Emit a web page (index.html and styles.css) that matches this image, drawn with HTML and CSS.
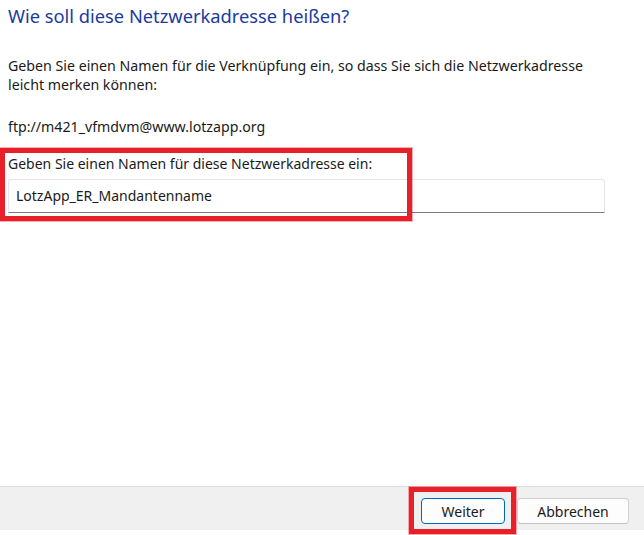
FILE: index.html
```html
<!DOCTYPE html>
<html lang="de">
<head>
<meta charset="utf-8">
<title>Netzwerkadresse</title>
<link rel="stylesheet" href="styles.css">
</head>
<body>
<div class="page">
  <main class="content">
    <h1 class="title">Wie soll diese Netzwerkadresse heißen?</h1>
    <p class="intro">Geben Sie einen Namen für die Verknüpfung ein, so dass Sie sich die Netzwerkadresse leicht merken können:</p>
    <p class="address">ftp://m421_vfmdvm@www.lotzapp.org</p>
    <div class="field">
      <label class="field-label" for="name">Geben Sie einen Namen für diese Netzwerkadresse ein:</label>
      <div class="input" id="name">LotzApp_ER_Mandantenname</div>
      <div class="mark mark-field"></div>
    </div>
  </main>
  <footer class="footer">
    <div class="btn-wrap">
      <button class="btn btn-primary">Weiter</button>
      <div class="mark mark-btn"></div>
    </div>
    <button class="btn">Abbrechen</button>
  </footer>
</div>
</body>
</html>
```
FILE: styles.css
```css
* { box-sizing: border-box; }
html, body { margin: 0; padding: 0; background: #ffffff; }
body {
  font-family: "Noto Sans", "Open Sans", sans-serif;
  color: #1a1a1a;
}
.page {
  width: 644px;
  height: 535px;
  display: flex;
  flex-direction: column;
}
.content {
  flex: 1;
  padding: 3px 39px 0 8px;
}
.title {
  margin: 0;
  font-size: 18.3px;
  font-weight: 400;
  color: #1c3b9e;
  line-height: 26px;
}
.intro {
  margin: 27px 0 0;
  font-size: 14.2px;
  line-height: 19px;
}
.address {
  margin: 23px 0 0;
  font-size: 14.2px;
  line-height: 19px;
}
.field {
  position: relative;
  margin-top: 18px;
}
.field-label {
  display: block;
  font-size: 14px;
  line-height: 19px;
}
.input {
  margin-top: 6px;
  width: 597px;
  height: 34px;
  border: 1px solid #e6e6e6;
  border-bottom: 1px solid #7a7a7a;
  border-radius: 3px 3px 0 0;
  padding: 0 7px;
  font-size: 14px;
  line-height: 32px;
}
.mark {
  position: absolute;
  border: 5px solid #e8202a;
  box-shadow: 0 0 0 1px rgba(232, 32, 42, 0.35);
  pointer-events: none;
}
.mark-field {
  left: -8px;
  top: -6px;
  width: 412px;
  height: 73px;
}
.footer {
  height: 44px;
  margin-bottom: 5px;
  background: #f0f0f0;
  border-top: 1px solid #dfdfdf;
  display: flex;
  justify-content: flex-end;
  align-items: flex-start;
  gap: 12px;
  padding: 11px 15px 0 0;
}
.btn-wrap { position: relative; display: flex; }
.btn {
  height: 26px;
  font-family: "Noto Sans", "Open Sans", sans-serif;
  font-size: 14px;
  color: #1a1a1a;
  background: #fdfdfd;
  border: 1px solid #d0d0d0;
  border-bottom-color: #c2c2c2;
  border-radius: 4px;
  padding: 0;
  width: 112px;
}
.btn-primary {
  width: 84px;
  border: 1px solid #0067c0;
}
.mark-btn {
  left: -12px;
  top: -11px;
  width: 107px;
  height: 47px;
}
```
